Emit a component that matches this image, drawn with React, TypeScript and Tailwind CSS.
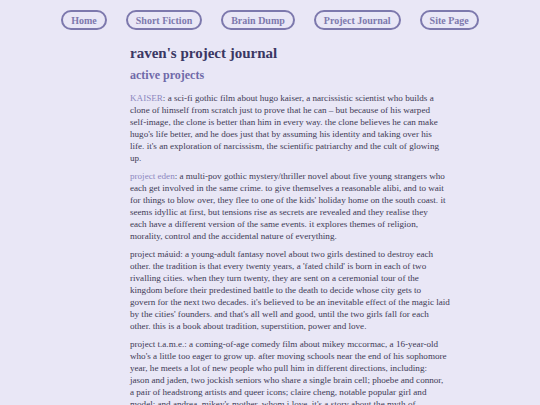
import React from "react";

const serif = { fontFamily: "Georgia, 'Liberation Serif', serif" };

function NavButton({ label }: { label: string }) {
  return (
    <a className="flex h-[20px] items-center rounded-[10px] border-2 border-[#7d79ad] px-[8px] text-[10px] font-bold text-[#7d79ad]">
      {label}
    </a>
  );
}

function Para({ link, lines }: { link?: string; lines: string[] }) {
  return (
    <p className="whitespace-nowrap">
      {lines.map((line, i) => (
        <React.Fragment key={i}>
          {i === 0 && link ? <span className="text-[#8c88c0]">{link}</span> : null}
          {line}
          {i < lines.length - 1 ? <br /> : null}
        </React.Fragment>
      ))}
    </p>
  );
}

export default function App() {
  return (
    <div
      className="min-h-[405px] w-full overflow-hidden bg-[#e9e7f6] text-[#3e3a55]"
      style={serif}
    >
      <nav className="flex justify-center gap-[19px] pt-[10px]">
        <NavButton label="Home" />
        <NavButton label="Short Fiction" />
        <NavButton label="Brain Dump" />
        <NavButton label="Project Journal" />
        <NavButton label="Site Page" />
      </nav>
      <main className="ml-[130px] w-[320px] pt-[12px]">
        <h1 className="text-[15px] font-bold leading-[22px] text-[#3a3763]">
          raven's project journal
        </h1>
        <h2 className="mt-[2px] text-[12px] font-bold leading-[18px] text-[#6f6aa9]">
          active projects
        </h2>
        <div className="mt-[8px] flex flex-col gap-[6px] text-[9.1px] leading-[12px]">
          <Para
            link="KAISER"
            lines={[
              ": a sci-fi gothic film about hugo kaiser, a narcissistic scientist who builds a",
              "clone of himself from scratch just to prove that he can – but because of his warped",
              "self-image, the clone is better than him in every way. the clone believes he can make",
              "hugo's life better, and he does just that by assuming his identity and taking over his",
              "life. it's an exploration of narcissism, the scientific patriarchy and the cult of glowing",
              "up.",
            ]}
          />
          <Para
            link="project eden"
            lines={[
              ": a multi-pov gothic mystery/thriller novel about five young strangers who",
              "each get involved in the same crime. to give themselves a reasonable alibi, and to wait",
              "for things to blow over, they flee to one of the kids' holiday home on the south coast. it",
              "seems idyllic at first, but tensions rise as secrets are revealed and they realise they",
              "each have a different version of the same events. it explores themes of religion,",
              "morality, control and the accidental nature of everything.",
            ]}
          />
          <Para
            lines={[
              "project máuid: a young-adult fantasy novel about two girls destined to destroy each",
              "other. the tradition is that every twenty years, a 'fated child' is born in each of two",
              "rivalling cities. when they turn twenty, they are sent on a ceremonial tour of the",
              "kingdom before their predestined battle to the death to decide whose city gets to",
              "govern for the next two decades. it's believed to be an inevitable effect of the magic laid",
              "by the cities' founders. and that's all well and good, until the two girls fall for each",
              "other. this is a book about tradition, superstition, power and love.",
            ]}
          />
          <Para
            lines={[
              "project t.a.m.e.: a coming-of-age comedy film about mikey mccormac, a 16-year-old",
              "who's a little too eager to grow up. after moving schools near the end of his sophomore",
              "year, he meets a lot of new people who pull him in different directions, including:",
              "jason and jaden, two jockish seniors who share a single brain cell; phoebe and connor,",
              "a pair of headstrong artists and queer icons; claire cheng, notable popular girl and",
              "model; and andrea, mikey's mother, whom i love. it's a story about the myth of",
              "adulthood and growing up too fast.",
            ]}
          />
        </div>
      </main>
    </div>
  );
}
